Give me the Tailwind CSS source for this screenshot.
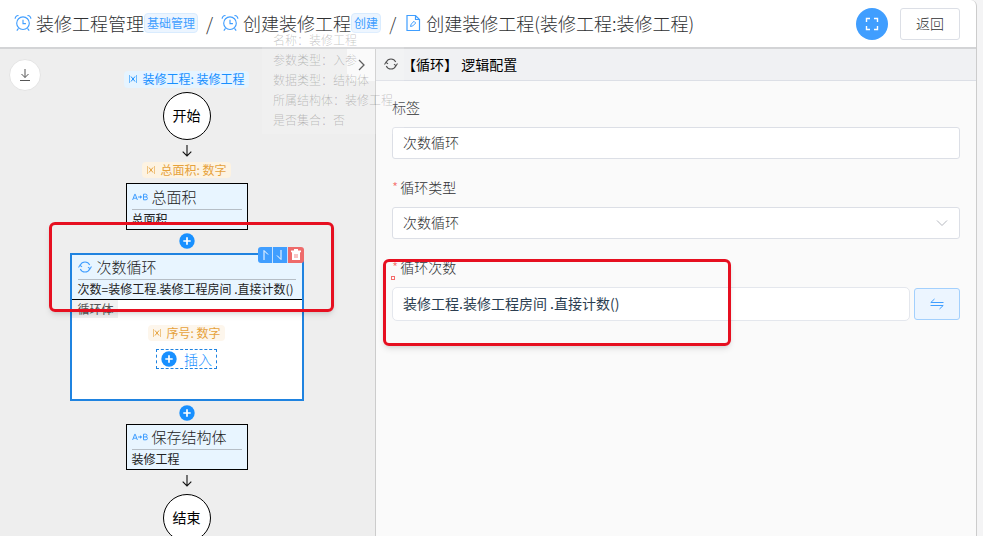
<!DOCTYPE html>
<html lang="zh-CN">
<head>
  <meta charset="UTF-8" />
  <meta name="viewport" content="width=device-width, initial-scale=1.0" />
  <title>创建装修工程</title>
  <script src="https://cdn.jsdelivr.net/npm/@tailwindcss/browser@4"></script>
</head>
<body class="bg-[#f4f4f5] font-['Noto_Sans_CJK_SC',sans-serif] text-sm text-[#303133]">
  <!-- icons shared by the page -->
  <svg class="hidden">
    <symbol id="clock" viewBox="0 0 16 16" fill="none" stroke="currentColor">
      <circle cx="8" cy="8.2" r="5.6" />
      <path d="M8 5v3.5h2.6M1 4.2C1 2.4 2.4 1.2 4 1.4M15 4.2C15 2.4 13.6 1.2 12 1.4M4 12.8l-1.5 2M12 12.8l1.5 2" />
    </symbol>
    <symbol id="loop" viewBox="0 0 16 16" fill="none" stroke="currentColor">
      <path d="M2.6 5.8a5.9 5.9 0 0 1 10.8 0M13.4 10.2a5.900 5.900 0 0 1-10.800 0M.6 8.600l1.600-2.600 2.400 1.800M15.400 7.400l-1.600 2.600-2.400-1.800" stroke-width="1.200" />
    </symbol>
    <symbol id="var" viewBox="0 0 10 10" fill="none" stroke="currentColor">
      <path d="M1.500 1v8M8.500 1v8" stroke-width=".6" />
      <path d="M3 2.500l4 5M7 2.500l-4 5" />
    </symbol>
    <symbol id="plus" viewBox="0 0 16 16">
      <circle cx="8" cy="8" r="7.7" fill="#1890ff" />
      <path d="M8 4.3v7.4M4.3 8h7.4" stroke="#fff" stroke-width="1.7" />
    </symbol>
    <symbol id="arrow" viewBox="0 0 10 12" fill="none" stroke="#111">
      <path d="M5 0v11M.7 6.7L5 11l4.3-4.3" stroke-width="1.1" />
    </symbol>
    <symbol id="assign" viewBox="0 0 16 8" fill="none" stroke="currentColor">
      <path d="M.6 7L2.8 1.2h.4L5.4 7M1.3 5.2h3.4M11.5 1.200V6.800H14a1.400 1.400 0 0 0 0-2.900h-2.500M11.500 1.200h2.200a1.300 1.300 0 0 1 0 2.700M6 4h3" />
      <path d="M8 2.200L10.300 4L8 5.800z" fill="currentColor" stroke="none" />
    </symbol>
  </svg>

  <div class="relative mr-[6px] flex h-screen flex-col overflow-hidden rounded-tr-md border-r border-[#ccc] bg-white">
    <header class="flex h-[49px] shrink-0 items-center border-b-2 border-[#d3d4d6] pr-4 pl-[14px]">
      <nav class="flex flex-1 items-center pb-[2px] text-lg font-light text-[#303133]">
        <svg class="mr-1 size-[18px] text-[#409eff]"><use href="#clock" /></svg>
        <a href="#">装修工程管理</a>
        <span class="rounded-sm border border-[#d9ecff] bg-[#ecf5ff] px-[2px] text-xs leading-[18px] font-normal text-[#409eff]">基础管理</span>
        <span class="mx-2">/</span>
        <svg class="mr-1 size-[18px] text-[#409eff]"><use href="#clock" /></svg>
        <a href="#">创建装修工程</a>
        <span class="rounded-sm border border-[#d9ecff] bg-[#ecf5ff] px-[2px] text-xs leading-[18px] font-normal text-[#409eff]">创建</span>
        <span class="mx-2">/</span>
        <svg class="mr-1 size-[18px] text-[#409eff]" viewBox="0 0 18 18" fill="none" stroke="currentColor">
          <path d="M3 1.5h8.500L15.500 5.500v11H3zM11.500 1.500v4h4" stroke-width="1.2" />
          <path d="M6.500 12.500l.6-2.300L10 7.300l1.700 1.700-2.900 2.900z" />
        </svg>
        <span>创建装修工程(装修工程:装修工程)</span>
      </nav>
      <button aria-label="全屏" class="mr-3 flex size-8 items-center justify-center rounded-full bg-[#409eff]">
        <svg class="size-[14px]" viewBox="0 0 14 14" fill="none" stroke="#fff" stroke-width="1.4">
          <path d="M1.500 5V1.500H5M9 1.500h3.500V5M12.500 9v3.500H9M5 12.500H1.500V9" />
        </svg>
      </button>
      <button class="h-8 w-[60px] rounded-[3px] border border-[#dcdfe6] bg-white pb-[2px] font-light text-[#303133]">返回</button>
    </header>

    <div class="flex min-h-0 flex-1">
      <!-- flow chart -->
      <main class="relative w-[376px] shrink-0 overflow-hidden border-r border-[#ccc] bg-[#eee]">
        <button aria-label="下载" class="absolute top-[10px] left-[9px] flex size-8 items-center justify-center rounded-full border border-[#e4e4e4] bg-white">
          <svg class="size-[14px]" viewBox="0 0 14 14" fill="none" stroke="#555"><path d="M7 1v8.500M3.500 6L7 9.500 10.500 6M2 12.500h10" /></svg>
        </button>
        <button aria-label="收起" class="absolute top-0 right-0 flex h-8 w-7 items-center justify-center bg-[#fafafa]">
          <svg class="size-3" viewBox="0 0 12 12" fill="none" stroke="#444" stroke-width="1.3"><path d="M4 1l5 5-5 5" /></svg>
        </button>

        <div class="flex flex-col items-center pt-[22px] pr-[2px]">
          <div class="mb-1 flex h-[17px] items-center gap-1 rounded-sm bg-[#e6f4ff] px-1 pb-px text-xs text-[#1890ff]">
            <svg class="size-[10px]"><use href="#var" /></svg>装修工程: 装修工程
          </div>
          <div class="flex size-12 items-center justify-center rounded-full border border-black bg-white pb-[2px] text-black">开始</div>
          <svg class="mt-[5px] h-3 w-[10px]"><use href="#arrow" /></svg>
          <div class="my-[5px] flex h-4 items-center gap-1 rounded-sm bg-[#fdf3e2] px-1 text-xs text-[#e6a23c]">
            <svg class="size-[10px]"><use href="#var" /></svg>总面积: 数字
          </div>
          <section class="h-[47px] w-[122px] border border-black bg-[#e8f5ff] px-[5px] text-[#222]">
            <h3 class="flex h-[26px] items-center gap-1 border-b border-[#b6bec6] text-[15px] font-light">
              <svg class="h-2 w-4 text-[#409eff]"><use href="#assign" /></svg>总面积
            </h3>
            <p class="text-xs leading-[18px]">总面积</p>
          </section>
          <button aria-label="插入" class="mt-[3px] mb-1 size-4"><svg class="size-4"><use href="#plus" /></svg></button>

          <section class="relative h-[148px] w-[234px] border-2 border-[#1f83e0] bg-white text-[#222]">
            <div class="h-[45px] border-b border-black bg-[#e8f5ff] px-[6px]">
              <h3 class="flex h-[25px] items-center gap-[5px] border-b border-[#b6bec6] text-[15px] font-light">
                <svg class="size-[14px] text-[#409eff]"><use href="#loop" /></svg>次数循环
              </h3>
              <p class="text-xs leading-[18px] whitespace-nowrap">次数=装修工程.装修工程房间 .直接计数()</p>
            </div>
            <span class="block h-[18px] w-[46px] bg-[#f1f1f1] pl-[6px] text-xs leading-[18px] text-[#555]">循环体</span>
            <div class="flex flex-col items-center gap-2 pt-[7px]">
              <div class="flex h-4 items-center gap-1 rounded-sm bg-[#fdf6ec] px-1 text-xs text-[#e6a23c]">
                <svg class="size-[10px]"><use href="#var" /></svg>序号: 数字
              </div>
              <button class="flex h-5 items-center gap-[7px] border border-dashed border-[#1f83e0] px-1 font-light text-[#1890ff]">
                <svg class="size-4"><use href="#plus" /></svg>插入
              </button>
            </div>
            <div class="absolute -top-2 -right-[2px] flex h-4 overflow-hidden rounded-[3px]">
              <button aria-label="上移" class="w-[15px] border-r border-white/70 bg-[#409eff]">
                <svg class="size-[14px]" viewBox="0 0 14 14" fill="none" stroke="#fff"><path d="M6 12V2.500l4 4" /></svg>
              </button>
              <button aria-label="下移" class="w-[15px] border-r border-white/70 bg-[#409eff]">
                <svg class="size-[14px]" viewBox="0 0 14 14" fill="none" stroke="#fff"><path d="M8 2v9.500l-4-4" /></svg>
              </button>
              <button aria-label="删除" class="w-4 bg-[#ee6b6b]">
                <svg class="size-4" viewBox="0 0 16 16"><path d="M4 5h8v8H4zM3 3.500h10v1.800H3zM6 2h4v2H6z" fill="#fff" /><path d="M7 7v4M9 7v4" stroke="#ee6b6b" stroke-width=".8" /></svg>
              </button>
            </div>
          </section>

          <button aria-label="插入" class="mt-1 mb-[3px] size-4"><svg class="size-4"><use href="#plus" /></svg></button>
          <section class="h-[46px] w-[122px] border border-black bg-[#e8f5ff] px-[5px] text-[#222]">
            <h3 class="flex h-[25px] items-center gap-1 border-b border-[#b6bec6] text-[15px] font-light">
              <svg class="h-2 w-4 text-[#409eff]"><use href="#assign" /></svg>保存结构体
            </h3>
            <p class="text-xs leading-[18px]">装修工程</p>
          </section>
          <svg class="mt-[5px] mb-[7px] h-3 w-[10px]"><use href="#arrow" /></svg>
          <div class="flex size-12 shrink-0 items-center justify-center rounded-full border border-black bg-white pb-[2px] text-black">结束</div>
        </div>
      </main>

      <!-- settings of the selected node -->
      <aside class="min-w-0 flex-1 bg-[#fafafa]">
        <h2 class="flex h-8 items-center gap-1 border-b border-[#dcdfe6] bg-[#f0f1f3] pb-px pl-2 text-black">
          <svg class="size-[14px] text-[#333]"><use href="#loop" /></svg>
          <span class="whitespace-pre">【循环】 逻辑配置</span>
        </h2>
        <form class="flex flex-col gap-[18px] p-4 font-light text-[#303133]">
          <div>
            <label for="tag" class="mb-[10px] block leading-5">标签</label>
            <input id="tag" type="text" value="次数循环" class="block h-8 w-full rounded-[3px] border border-[#dcdfe6] bg-white px-[10px] pb-[2px]" />
          </div>
          <div>
            <label for="kind" class="mb-[10px] block leading-5"><span class="mr-[2px] text-[#f56c6c]">*</span>循环类型</label>
            <div class="relative">
              <select id="kind" class="block h-8 w-full appearance-none rounded-[3px] border border-[#dcdfe6] bg-white px-[10px] pb-[2px]">
                <option>次数循环</option>
              </select>
              <svg class="pointer-events-none absolute top-[10px] right-3 size-3" viewBox="0 0 12 12" fill="none" stroke="#b5b8bf"><path d="M1 3.500l5 5 5-5" /></svg>
            </div>
          </div>
          <div>
            <label for="times" class="mb-[10px] block leading-5"><span class="mr-[2px] text-[#f56c6c]">*</span>循环次数</label>
            <div class="flex items-center gap-1">
              <input id="times" type="text" value="装修工程.装修工程房间 .直接计数()" class="h-[34px] min-w-0 flex-1 rounded-[5px] border border-[#e4e7ed] bg-white px-[10px] pb-[2px] font-normal text-[#2c3e50]" />
              <button type="button" aria-label="切换" class="flex h-8 w-[46px] items-center justify-center rounded-[3px] border border-[#a3d0fd] bg-[#ecf5ff]">
                <svg class="size-[14px]" viewBox="0 0 14 14" fill="none" stroke="#409eff"><path d="M13.500 5.500H.8L4.500 2M.5 8.500h12.700L9.500 12" /></svg>
              </button>
            </div>
          </div>
        </form>
      </aside>
    </div>

    <!-- tooltip fading out -->
    <div class="pointer-events-none absolute top-[30px] left-[262px] h-[104px] w-[142px] bg-white/15 pl-[11px] text-xs leading-5 font-light whitespace-nowrap text-black/25">
      <p>名称：装修工程</p>
      <p>参数类型：入参</p>
      <p>数据类型：结构体</p>
      <p>所属结构体：装修工程</p>
      <p>是否集合：否</p>
    </div>

    <!-- highlight marks -->
    <div class="pointer-events-none absolute top-[222px] left-[49px] h-[90px] w-[285px] rounded-md border-3 border-[#e60f20] shadow-md"></div>
    <div class="pointer-events-none absolute top-[259px] left-[383px] h-[87px] w-[348px] rounded-md border-3 border-[#e60f20] shadow-md"></div>
    <span class="pointer-events-none absolute top-[276px] left-[391px] h-1 w-1 border border-[#f56c6c]"></span>
  </div>
</body>
</html>
